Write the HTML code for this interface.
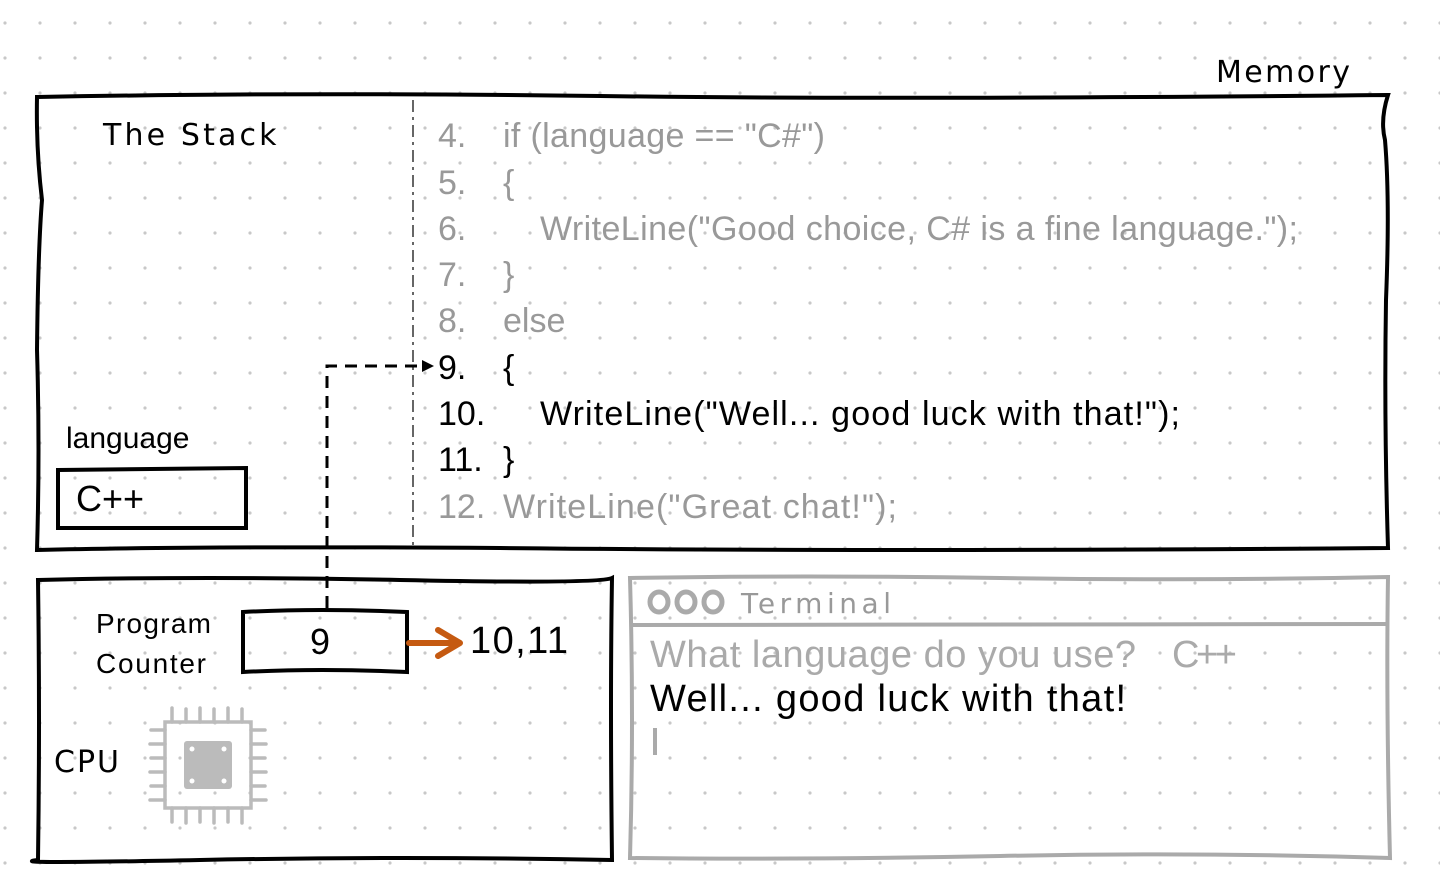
<!DOCTYPE html>
<html><head><meta charset="utf-8"><style>
html,body{margin:0;padding:0;background:#fff;}
svg{display:block}
.h{font-family:"DejaVu Sans",sans-serif;}
.c{font-family:"Liberation Sans","DejaVu Sans",sans-serif;}
</style></head><body>
<svg width="1440" height="891" viewBox="0 0 1440 891" xmlns="http://www.w3.org/2000/svg">
<defs>
<pattern id="d" x="5" y="23" width="35" height="35" patternUnits="userSpaceOnUse">
<circle cx="0" cy="0" r="1.6" fill="#c8c8c8"/><circle cx="35" cy="0" r="1.6" fill="#c8c8c8"/><circle cx="0" cy="35" r="1.6" fill="#c8c8c8"/><circle cx="35" cy="35" r="1.6" fill="#c8c8c8"/>
</pattern>
</defs>
<rect width="1440" height="891" fill="url(#d)"/>

<text x="1216" y="82" class="h" font-size="30" letter-spacing="2" textLength="136">Memory</text>
<path d="M37 97 Q300 92 600 96 T1388 95 Q1380 120 1385 140 Q1390 200 1386 300 Q1384 420 1388 548 Q900 552 500 548 Q200 546 37 550 Q40 450 37 350 Q38 250 42 200 Q36 150 37 97 Z" fill="none" stroke="#000" stroke-width="4"/>
<text x="103" y="145" class="h" font-size="30" letter-spacing="1.5" textLength="175">The Stack</text>
<line x1="413" y1="100" x2="413" y2="545" stroke="#666" stroke-width="2" stroke-dasharray="12,5,3,5"/>

<g class="c" font-size="34">
<g fill="#999">
<text x="438" y="147">4.</text><text x="503" y="147" textLength="322">if (language == "C#")</text>
<text x="438" y="194">5.</text><text x="503" y="194">{</text>
<text x="438" y="240">6.</text><text x="540" y="240" textLength="758">WriteLine("Good choice, C# is a fine language.");</text>
<text x="438" y="286">7.</text><text x="503" y="286">}</text>
<text x="438" y="332">8.</text><text x="503" y="332">else</text>
<text x="438" y="518">12.</text><text x="503" y="518" textLength="394">WriteLine("Great chat!");</text>
</g>
<text x="438" y="379">9.</text><text x="503" y="379">{</text>
<text x="438" y="425">10.</text><text x="540" y="425" textLength="640">WriteLine("Well... good luck with that!");</text>
<text x="438" y="471">11.</text><text x="503" y="471">}</text>
</g>

<text x="66" y="448" class="c" font-size="30">language</text>
<path d="M58 470 L246 468 L246 528 L58 528 Z" fill="none" stroke="#000" stroke-width="4"/>
<text x="76" y="511" class="c" font-size="36">C++</text>

<path d="M327 608 L327 366 L424 366" fill="none" stroke="#000" stroke-width="3" stroke-dasharray="12,8"/>
<path d="M422 360 L434 366 L422 372 Z" fill="#000"/>

<!-- CPU box -->
<path d="M38 580 Q200 576 400 580 T612 578 Q610 700 612 860 Q400 856 200 860 T38 860 Q40 720 38 580 Z" fill="none" stroke="#000" stroke-width="4"/>
<text x="96" y="633" class="c" font-size="28" textLength="115">Program</text>
<text x="96" y="673" class="c" font-size="28" textLength="110">Counter</text>
<path d="M243 612 Q320 608 407 612 L407 672 Q320 668 243 672 Z" fill="none" stroke="#000" stroke-width="4"/>
<text x="310" y="654" class="c" font-size="36">9</text>
<path d="M409 643 L452 643" stroke="#c55a11" stroke-width="6" stroke-linecap="round"/>
<path d="M438 630 L460 643 L438 656" fill="none" stroke="#c55a11" stroke-width="6" stroke-linecap="round" stroke-linejoin="round"/>
<text x="470" y="653" class="c" font-size="38" textLength="98">10,11</text>
<text x="54" y="772" class="h" font-size="30" letter-spacing="2">CPU</text>

<!-- chip icon -->
<g stroke="#bbb" stroke-width="3.5" fill="none" stroke-linecap="round">
<rect x="165" y="722" width="86" height="86"/>
<path d="M172 722 V708 M186 722 V709 M200 722 V708 M214 722 V709 M228 722 V708 M242 722 V709"/>
<path d="M172 808 V822 M186 808 V823 M200 808 V822 M214 808 V823 M228 808 V822 M242 808 V823"/>
<path d="M165 730 H151 M165 744 H150 M165 758 H151 M165 772 H150 M165 786 H151 M165 800 H150"/>
<path d="M251 730 H265 M251 744 H266 M251 758 H265 M251 772 H266 M251 786 H265 M251 800 H266"/>
</g>
<rect x="184" y="741" width="48" height="48" rx="3" fill="#bbb"/>
<g fill="#fff"><circle cx="192" cy="749" r="2.5"/><circle cx="224" cy="749" r="2.5"/><circle cx="192" cy="781" r="2.5"/><circle cx="224" cy="781" r="2.5"/></g>

<!-- Terminal -->
<path d="M630 578 Q800 575 1000 578 T1388 577 Q1386 700 1390 858 Q1200 852 1000 856 T630 858 Q634 720 630 578 Z" fill="none" stroke="#aaa" stroke-width="4"/>
<line x1="630" y1="625" x2="1388" y2="624" stroke="#aaa" stroke-width="4"/>
<g fill="none" stroke="#aaa" stroke-width="5">
<ellipse cx="659" cy="602" rx="9" ry="10"/><ellipse cx="686" cy="602" rx="9" ry="10"/><ellipse cx="713" cy="602" rx="9" ry="10"/>
</g>
<text x="741" y="613" class="h" font-size="28" fill="#999" letter-spacing="2" textLength="152">Terminal</text>
<text x="650" y="667" class="c" font-size="38" fill="#aaa" textLength="486">What language do you use?</text>
<text x="1172" y="667" class="c" font-size="38" fill="#aaa" textLength="65">C++</text>
<text x="650" y="711" class="c" font-size="38" fill="#000" textLength="476">Well... good luck with that!</text>
<line x1="655" y1="728" x2="655" y2="755" stroke="#aaa" stroke-width="4"/>
</svg>
</body></html>
